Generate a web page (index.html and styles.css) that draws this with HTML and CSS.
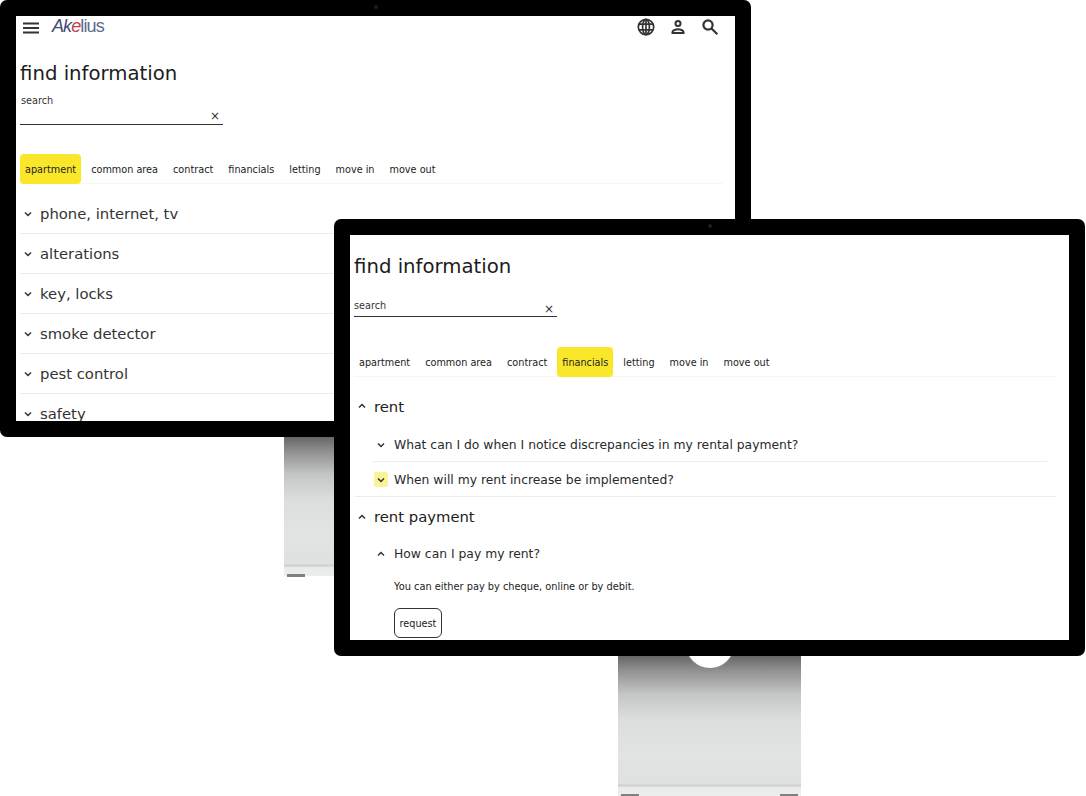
FILE: index.html
```html
<!DOCTYPE html>
<html lang="en">
<head>
<meta charset="utf-8">
<title>find information</title>
<link rel="stylesheet" href="styles.css">
</head>
<body>
<div class="canvas">
  <div class="stand stand-back"><i class="foot foot-left"></i></div>
  <div class="monitor monitor-back">
    <i class="camera"></i>
    <div class="screen">
      <header class="topbar">
        <svg class="menu" viewBox="0 0 16 12"><path d="M0 1.500h16M0 6h16M0 10.500h16"/></svg>
        <span class="logo"><span class="logo-a">Ak</span><span class="logo-e">e</span><span class="logo-l">lius</span></span>
        <span class="spacer"></span>
        <svg class="tool globe" viewBox="0 0 18 18"><circle cx="9" cy="9" r="7.700"/><ellipse cx="9" cy="9" rx="3.400" ry="7.700"/><path d="M9 1.300v15.400M1.800 6.200h14.400M1.800 11.800h14.400"/></svg>
        <svg class="tool user" viewBox="0 0 18 18"><circle cx="9" cy="5.500" r="2.500"/><path d="M3.500 15v-1c0-1.800 3.500-2.700 5.500-2.700s5.500.9 5.500 2.700v1z"/></svg>
        <svg class="tool find" viewBox="0 0 18 18"><circle cx="7" cy="7" r="4.600"/><path d="M10.500 10.500l5.800 5.800"/></svg>
      </header>
      <h1 class="title title-back">find information</h1>
      <div class="search search-back">
        <span class="search-label">search</span>
        <span class="clear">×</span>
      </div>
      <nav class="tabs tabs-back">
        <span class="tab tab-on">apartment</span><span class="tab">common area</span><span class="tab">contract</span><span class="tab">financials</span><span class="tab">letting</span><span class="tab">move in</span><span class="tab">move out</span>
      </nav>
      <ul class="topics">
        <li class="topic"><svg class="chev" viewBox="0 0 10 10"><path d="M2 3.500l3 3 3-3"/></svg>phone, internet, tv</li>
        <li class="topic"><svg class="chev" viewBox="0 0 10 10"><path d="M2 3.500l3 3 3-3"/></svg>alterations</li>
        <li class="topic"><svg class="chev" viewBox="0 0 10 10"><path d="M2 3.500l3 3 3-3"/></svg>key, locks</li>
        <li class="topic"><svg class="chev" viewBox="0 0 10 10"><path d="M2 3.500l3 3 3-3"/></svg>smoke detector</li>
        <li class="topic"><svg class="chev" viewBox="0 0 10 10"><path d="M2 3.500l3 3 3-3"/></svg>pest control</li>
        <li class="topic"><svg class="chev" viewBox="0 0 10 10"><path d="M2 3.500l3 3 3-3"/></svg>safety</li>
      </ul>
    </div>
  </div>

  <div class="stand stand-front"><i class="notch"></i><i class="foot foot-left"></i><i class="foot foot-right"></i></div>
  <div class="monitor monitor-front">
    <i class="camera"></i>
    <div class="screen">
      <h1 class="title title-front">find information</h1>
      <div class="search search-front">
        <span class="search-label">search</span>
        <span class="clear">×</span>
      </div>
      <nav class="tabs tabs-front">
        <span class="tab">apartment</span><span class="tab">common area</span><span class="tab">contract</span><span class="tab tab-on">financials</span><span class="tab">letting</span><span class="tab">move in</span><span class="tab">move out</span>
      </nav>
      <section class="group group-closed">
        <h2 class="group-head"><svg class="chev" viewBox="0 0 10 10"><path d="M2 6.500l3-3 3 3"/></svg>rent</h2>
        <div class="question q-line"><span class="qicon"><svg class="chev" viewBox="0 0 10 10"><path d="M2 3.500l3 3 3-3"/></svg></span>What can I do when I notice discrepancies in my rental payment?</div>
        <div class="question q-last"><span class="qicon qicon-on"><svg class="chev" viewBox="0 0 10 10"><path d="M2 3.500l3 3 3-3"/></svg></span>When will my rent increase be implemented?</div>
      </section>
      <section class="group group-open">
        <h2 class="group-head"><svg class="chev" viewBox="0 0 10 10"><path d="M2 6.500l3-3 3 3"/></svg>rent payment</h2>
        <div class="question"><span class="qicon"><svg class="chev" viewBox="0 0 10 10"><path d="M2 6.500l3-3 3 3"/></svg></span>How can I pay my rent?</div>
        <p class="answer">You can either pay by cheque, online or by debit.</p>
        <button class="request" type="button">request</button>
      </section>
    </div>
  </div>
</div>
</body>
</html>
```
FILE: styles.css
```css
* { box-sizing: border-box; }
html, body { margin: 0; padding: 0; background: #fff; }
body { font-family: "DejaVu Sans", Verdana, sans-serif; color: #222; }
.canvas { position: relative; width: 1086px; height: 796px; overflow: hidden; }

.monitor {
  position: absolute;
  width: 751px;
  height: 437px;
  padding: 16px;
  background: #000;
  border-radius: 7px;
}
.monitor-back { left: 0; top: 0; }
.monitor-front { left: 334px; top: 219px; }
.camera {
  position: absolute;
  left: 374px;
  top: 5px;
  width: 4px;
  height: 4px;
  border-radius: 50%;
  background: #1c1c22;
}
.screen { height: 405px; background: #fff; overflow: hidden; }

.stand {
  position: absolute;
  background: linear-gradient(#666 0, #8f8f8f 10%, #c4c5c5 27%, #dcdddd 45%, #e2e3e3 70%, #dfe0e0 91%, #cdcece 92.500%, #e9eaea 94%, #eceded 100%);
}
.stand-back { left: 284px; top: 437px; width: 60px; height: 139px; }
.stand-front { left: 618px; top: 656px; width: 183px; height: 140px; }
.notch {
  position: absolute;
  left: 68px;
  top: -20px;
  width: 48px;
  height: 32px;
  border-radius: 0 0 24px 24px;
  background: #fff;
  box-shadow: 0 1px 3px #888;
}
.foot { position: absolute; bottom: -1px; width: 18px; height: 3px; background: #808080; }
.foot-left { left: 3px; }
.foot-right { right: 3px; }

.topbar { display: flex; align-items: center; height: 22px; padding: 0 16px 0 7px; }
.menu { width: 16px; height: 12px; fill: none; stroke: #333; stroke-width: 1.800; margin-top: 1px; }
.logo { margin-left: 13px; margin-top: -2px; font-family: "Liberation Sans", Arial, sans-serif; font-size: 18px; letter-spacing: -0.9px; color: #5b6a8a; }
.logo-a { color: #3d4c78; font-style: italic; }
.logo-e { color: #c2404f; font-style: italic; }
.spacer { flex: 1; }
.tool { width: 18px; height: 18px; margin-left: 14px; fill: none; stroke: #333; stroke-width: 1.700; }
.user { stroke-width: 2; }
.find { stroke-width: 2.200; }

.title { margin: 0; font-weight: 400; font-size: 19.700px; line-height: 26px; color: #1c1c1c; }
.title-back { margin: 23px 0 0 4px; }
.title-front { margin: 19px 0 0 4px; }

.search { position: relative; width: 203px; margin-left: 4px; border-bottom: 1px solid #333; font-size: 9.700px; color: #333; }
.search-back { height: 38px; padding: 8px 0 0 1px; }
.search-front { height: 27px; margin-top: 10px; padding-top: 10px; }
.search-label { display: block; line-height: 12px; }
.clear { position: absolute; right: 3px; bottom: 2px; font-size: 12px; line-height: 12px; color: #333; }
.search-front .clear { bottom: 1px; }

.tabs { display: flex; margin-left: 4px; border-bottom: 1px solid #f6f6f6; font-size: 9.700px; color: #222; }
.tabs-back { margin-top: 29px; width: 703px; height: 30px; }
.tabs-front { margin-top: 30px; width: 703px; height: 30px; }
.tab { display: block; padding: 0 5px; margin-right: 5px; line-height: 31px; height: 30px; border-radius: 4px; white-space: nowrap; }
.tab-on { background: #fbe72a; color: #222; }

.topics { list-style: none; margin: 10px 0 0 4px; padding: 0; }
.topic { display: flex; align-items: center; height: 40px; border-bottom: 1px solid #ececec; font-size: 14.800px; color: #333; padding-bottom: 1px; }
.chev { width: 10px; height: 10px; fill: none; stroke: #333; stroke-width: 1.500; flex: none; }
.topic .chev { margin: 1px 7px 0 3px; }

.group { margin: 0 0 0 5px; width: 701px; }
.group-closed { border-bottom: 1px solid #ececec; }
.group-head { display: flex; align-items: center; height: 40px; padding-bottom: 2px; margin: 10px 0 0; font-weight: 400; font-size: 14.800px; color: #222; }
.group-open .group-head { margin-top: 0; height: 39px; padding-bottom: 0; }
.group-head .chev { margin: 0 7px 0 2px; }
.question { display: flex; align-items: center; height: 35px; padding-top: 1px; margin-left: 18px; width: 674px; font-size: 12.350px; color: #2a2a2a; }
.q-line { border-bottom: 1px solid #ececec; }
.q-last { height: 34px; }
.qicon { display: flex; align-items: center; justify-content: center; width: 14px; height: 15px; margin: 0 6px 0 1px; border-radius: 2px; }
.qicon-on { background: #fbf29a; }
.answer { margin: 10px 0 0 39px; font-size: 9.800px; line-height: 12px; color: #222; }
.request {
  display: block;
  margin: 15px 0 0 39px;
  width: 48px;
  height: 30px;
  padding: 0;
  background: #fff;
  border: 1px solid #333;
  border-radius: 6px;
  font: 9.700px "DejaVu Sans", Verdana, sans-serif;
  color: #222;
}
```
